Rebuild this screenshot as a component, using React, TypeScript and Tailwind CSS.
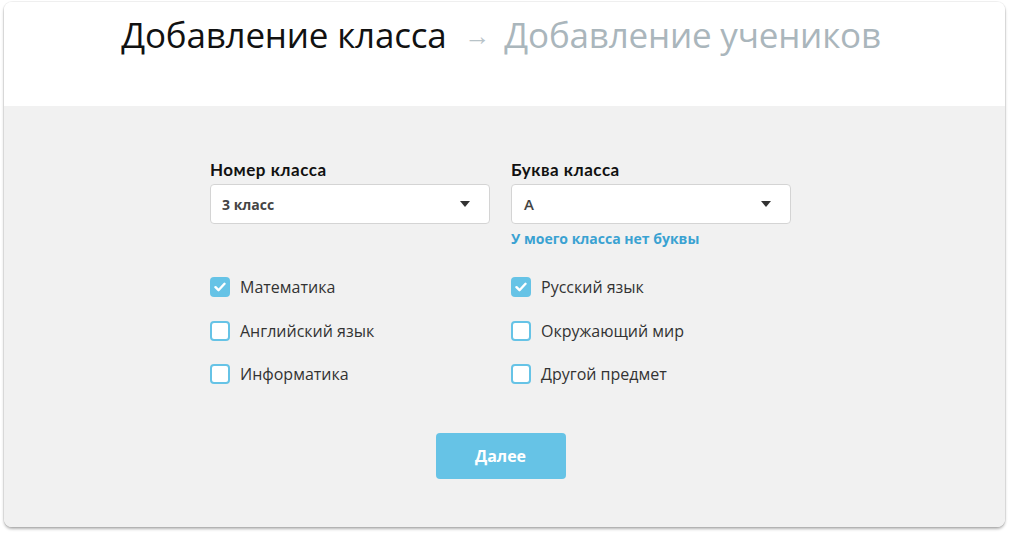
import { useState } from 'react';

const subjects = [
  { name: 'Математика', checked: true },
  { name: 'Русский язык', checked: true },
  { name: 'Английский язык', checked: false },
  { name: 'Окружающий мир', checked: false },
  { name: 'Информатика', checked: false },
  { name: 'Другой предмет', checked: false },
];

function Caret() {
  return (
    <svg width="10" height="6" viewBox="0 0 10 6">
      <path d="M0 0h10L5 6z" fill="#333" />
    </svg>
  );
}

function Checkbox({ checked }: { checked: boolean }) {
  return (
    <span
      className={
        checked
          ? 'w-5 h-5 rounded-[4px] bg-[#66c3e6] flex items-center justify-center'
          : 'w-5 h-5 rounded-[4px] bg-white border-2 border-[#66c3e6]'
      }
    >
      {checked && (
        <svg width="12" height="10" viewBox="0 0 12 10">
          <path d="M1.5 5.2l3 3 6-6.4" stroke="#fff" strokeWidth="2.4" fill="none" strokeLinecap="round" strokeLinejoin="round" />
        </svg>
      )}
    </span>
  );
}

export default function App() {
  const [items, setItems] = useState(subjects);

  const toggle = (i: number) => {
    setItems(prev => prev.map((s, idx) => (idx === i ? { ...s, checked: !s.checked } : s)));
  };

  return (
    <div className="w-[1010px] h-[537px] bg-white px-[4px] pt-[2px]" style={{ fontFamily: '"Open Sans", sans-serif' }}>
      <div className="w-[1001px] h-[525px] rounded-[8px] overflow-hidden shadow-[0_2px_3px_rgba(0,0,0,0.3),0_0_0_1px_rgba(0,0,0,0.05)] flex flex-col">
        {/* Шаги */}
        <div className="h-[104px] bg-white flex justify-center pt-[10px]">
          <div className="text-[35px] leading-[46px] tracking-[-0.2px] pr-[7px]">
            <span className="text-[#111]">Добавление класса</span>
            <span className="text-[#b8c3c8] text-[26px] ml-[18px] mr-[14px] relative top-[-3px]">→</span>
            <span className="text-[#aab6bc]">Добавление учеников</span>
          </div>
        </div>

        <div className="flex-1 bg-[#f1f1f1] pt-[53px]">
          <div className="w-[581px] ml-[206px]">
            <div className="grid grid-cols-[280px_280px] gap-x-[21px]">
              <div>
                <div className="text-[17px] font-bold text-[#111] leading-[22px] mb-[3px] tracking-[0.5px]" style={{ fontFamily: 'Lato, sans-serif' }}>Номер класса</div>
                <div className="h-[40px] bg-white border border-[#d4d4d4] rounded-[4px] flex items-center justify-between pl-[11px] pr-[19px]">
                  <span className="text-[14px] font-bold text-[#444]">3 класс</span>
                  <Caret />
                </div>
              </div>
              <div>
                <div className="text-[17px] font-bold text-[#111] leading-[22px] mb-[3px] tracking-[0.5px]" style={{ fontFamily: 'Lato, sans-serif' }}>Буква класса</div>
                <div className="h-[40px] bg-white border border-[#d4d4d4] rounded-[4px] flex items-center justify-between pl-[12px] pr-[19px]">
                  <span className="text-[15px] font-semibold text-[#444]">А</span>
                  <Caret />
                </div>
                <div className="text-[14px] font-bold text-[#3aa2d2] mt-[5px] leading-[19px]">У моего класса нет буквы</div>
              </div>
            </div>

            <div className="grid grid-cols-[280px_280px] gap-x-[21px] gap-y-[23.5px] mt-[29px]">
              {items.map((s, i) => (
                <label key={s.name} className="flex items-center gap-[10px] h-[20px] cursor-pointer" onClick={() => toggle(i)}>
                  <Checkbox checked={s.checked} />
                  <span className="text-[16px] text-[#333]">{s.name}</span>
                </label>
              ))}
            </div>

            <div className="flex justify-center mt-[49px]">
              <button className="w-[130px] h-[46px] rounded-[4px] bg-[#66c3e6] text-white text-[16px] font-bold">Далее</button>
            </div>
          </div>
        </div>
      </div>
    </div>
  );
}
